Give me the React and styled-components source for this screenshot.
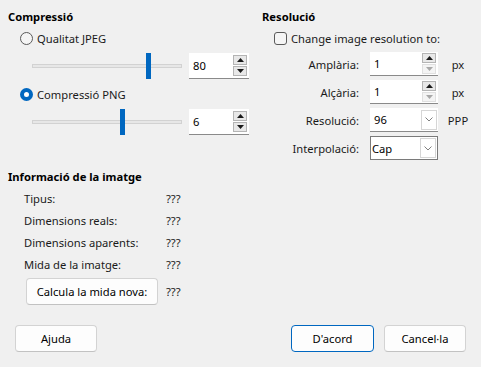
import React from 'react';
import styled, { createGlobalStyle } from 'styled-components';

const GlobalStyle = createGlobalStyle`
  html, body {
    margin: 0;
    padding: 0;
    background: #f0f0f0;
  }
  body {
    font-family: "Noto Sans", "Liberation Sans", sans-serif;
    font-size: 11.2px;
    color: #1a1a1a;
  }
`;

const infoRows = [
  { label: 'Tipus:', value: '???' },
  { label: 'Dimensions reals:', value: '???' },
  { label: 'Dimensions aparents:', value: '???' },
  { label: 'Mida de la imatge:', value: '???' },
];

const TriangleUp = ({ color = '#1a1a1a' }) => (
  <svg width="7" height="4" viewBox="0 0 7 4">
    <path d="M0 4 L3.5 0 L7 4 Z" fill={color} />
  </svg>
);

const TriangleDown = ({ color = '#1a1a1a' }) => (
  <svg width="7" height="4" viewBox="0 0 7 4">
    <path d="M0 0 L3.5 4 L7 0 Z" fill={color} />
  </svg>
);

const Chevron = () => (
  <svg width="8" height="5" viewBox="0 0 8 5">
    <path d="M0.5 0.5 L4 4 L7.5 0.5" fill="none" stroke="#808080" strokeWidth="1" />
  </svg>
);

const Slider = ({ percent }) => (
  <SliderTrack>
    <SliderThumb style={{ left: `${percent}%` }} />
  </SliderTrack>
);

const Spin = ({ value, $wide, downDisabled }) => (
  <SpinBox $wide={$wide}>
    <SpinValue>{value}</SpinValue>
    <SpinButtons>
      <SpinButton>
        <TriangleUp />
      </SpinButton>
      <SpinButton $disabled={downDisabled}>
        <TriangleDown color={downDisabled ? '#a8a8a8' : '#1a1a1a'} />
      </SpinButton>
    </SpinButtons>
  </SpinBox>
);

const Combo = ({ value, $framed }) => (
  <ComboBox $framed={$framed}>
    <SpinValue>{value}</SpinValue>
    <ComboButton>
      <Chevron />
    </ComboButton>
  </ComboBox>
);

const App = () => {
  return (
    <>
      <GlobalStyle />
      <Dialog>
        <Top>
          <Column>
            <Heading>Compressió</Heading>
            <OptionRow>
              <Radio />
              Qualitat JPEG
            </OptionRow>
            <SliderRow>
              <Slider percent={76.5} />
              <Spin value="80" />
            </SliderRow>
            <OptionRow $top={7}>
              <Radio $checked />
              Compressió PNG
            </OptionRow>
            <SliderRow>
              <Slider percent={59} />
              <Spin value="6" />
            </SliderRow>

            <Heading $top={34}>Informació de la imatge</Heading>
            <InfoGrid>
              {infoRows.map((row) => (
                <React.Fragment key={row.label}>
                  <span>{row.label}</span>
                  <span>{row.value}</span>
                </React.Fragment>
              ))}
            </InfoGrid>
            <CalcRow>
              <Button $width={132}>Calcula la mida nova:</Button>
              <span>???</span>
            </CalcRow>
          </Column>

          <Column>
            <Heading>Resolució</Heading>
            <OptionRow>
              <Checkbox />
              Change image resolution to:
            </OptionRow>
            <FieldGrid>
              <FieldLabel>Amplària:</FieldLabel>
              <Spin value="1" $wide downDisabled />
              <Unit>px</Unit>

              <FieldLabel>Alçària:</FieldLabel>
              <Spin value="1" $wide downDisabled />
              <Unit>px</Unit>

              <FieldLabel>Resolució:</FieldLabel>
              <Combo value="96" />
              <Unit>PPP</Unit>

              <FieldLabel>Interpolació:</FieldLabel>
              <Combo value="Cap" $framed />
              <span />
            </FieldGrid>
          </Column>
        </Top>

        <Footer>
          <Button $width={82}>Ajuda</Button>
          <ButtonGroup>
            <Button $width={83} $primary>D'acord</Button>
            <Button $width={82}>Cancel·la</Button>
          </ButtonGroup>
        </Footer>
      </Dialog>
    </>
  );
};

export default App;

const Dialog = styled.div`
  width: 481px;
  height: 367px;
  box-sizing: border-box;
  padding-top: 9px;
  background: #f0f0f0;
  overflow: hidden;
`;

const Top = styled.div`
  display: grid;
  grid-template-columns: 242px 219px;
  column-gap: 12px;
  padding-left: 8px;
`;

const Column = styled.div`
  display: flex;
  flex-direction: column;
`;

const Heading = styled.div`
  font-weight: 700;
  line-height: 16px;
  height: 16px;
  color: #000;
  margin-top: ${(p) => p.$top || 0}px;
`;

const OptionRow = styled.div`
  display: flex;
  align-items: center;
  gap: 4px;
  height: 16px;
  margin-top: ${(p) => p.$top || 5}px;
  padding-left: 12px;
`;

const Radio = styled.span`
  width: 13px;
  height: 13px;
  box-sizing: border-box;
  border-radius: 50%;
  flex-shrink: 0;
  border: ${(p) => (p.$checked ? '4px solid #0067c0' : '1px solid #5a5a5a')};
  background: ${(p) => (p.$checked ? '#fff' : '#f5f5f5')};
`;

const Checkbox = styled.span`
  width: 13px;
  height: 13px;
  box-sizing: border-box;
  border: 1px solid #5a5a5a;
  border-radius: 3px;
  background: #f5f5f5;
  flex-shrink: 0;
`;

const SliderRow = styled.div`
  display: flex;
  align-items: center;
  gap: 7px;
  height: 26px;
  margin-top: 7px;
  padding-left: 24px;
`;

const SliderTrack = styled.div`
  position: relative;
  width: 150px;
  height: 4px;
  box-sizing: border-box;
  background: #e7e7e7;
  border: 1px solid #d2d2d2;
`;

const SliderThumb = styled.span`
  position: absolute;
  top: -12px;
  width: 5px;
  height: 26px;
  background: #0067c0;
`;

const SpinBox = styled.div`
  display: flex;
  align-items: center;
  width: ${(p) => (p.$wide ? 68 : 60)}px;
  height: ${(p) => (p.$wide ? 24 : 26)}px;
  box-sizing: border-box;
  background: #fff;
  border-bottom: 1px solid #8a8a8a;
`;

const SpinValue = styled.span`
  flex: 1;
  padding-left: 4px;
  color: #000;
`;

const SpinButtons = styled.div`
  display: flex;
  flex-direction: column;
  gap: 1px;
  margin-right: 2px;
`;

const SpinButton = styled.span`
  display: flex;
  align-items: center;
  justify-content: center;
  width: 14px;
  height: 10px;
  box-sizing: border-box;
  background: ${(p) => (p.$disabled ? '#f4f4f4' : '#e8e8e8')};
  border: 1px solid ${(p) => (p.$disabled ? '#e0e0e0' : '#b4b4b4')};
`;

const ComboBox = styled.div`
  display: flex;
  align-items: center;
  width: 68px;
  height: 24px;
  box-sizing: border-box;
  background: #fff;
  border: ${(p) => (p.$framed ? '1px solid #7a7a7a' : 'none')};
  border-bottom: 1px solid ${(p) => (p.$framed ? '#7a7a7a' : '#8a8a8a')};
  & > span:first-child {
    padding-left: ${(p) => (p.$framed ? 1 : 4)}px;
  }
`;

const ComboButton = styled.span`
  display: flex;
  align-items: center;
  justify-content: center;
  width: 16px;
  height: 20px;
  box-sizing: border-box;
  margin-right: 1px;
  border: 1px solid #d6d6d6;
  background: #fff;
`;

const FieldGrid = styled.div`
  display: grid;
  grid-template-columns: 108px 68px 38px;
  grid-auto-rows: 24px;
  row-gap: 4px;
  align-items: center;
  margin-top: 6px;
`;

const FieldLabel = styled.span`
  text-align: right;
  padding-right: 11px;
`;

const Unit = styled.span`
  text-align: center;
  padding-left: 2px;
`;

const InfoGrid = styled.div`
  display: grid;
  grid-template-columns: 142px auto;
  grid-auto-rows: 22px;
  align-items: center;
  margin-top: 2px;
  padding-left: 16px;
`;

const CalcRow = styled.div`
  display: flex;
  align-items: center;
  gap: 8px;
  margin-top: 3px;
  padding-left: 18px;
`;

const Button = styled.button`
  width: ${(p) => p.$width}px;
  height: 27px;
  padding: 0;
  font: inherit;
  color: #000;
  background: #fdfdfd;
  border: 1px solid ${(p) => (p.$primary ? '#0067c0' : '#d3d3d3')};
  border-bottom-color: ${(p) => (p.$primary ? '#0067c0' : '#c2c2c2')};
  border-radius: 4px;
  cursor: pointer;
`;

const Footer = styled.div`
  display: flex;
  justify-content: space-between;
  margin-top: 20px;
  padding: 0 15px;
`;

const ButtonGroup = styled.div`
  display: flex;
  gap: 10px;
`;
